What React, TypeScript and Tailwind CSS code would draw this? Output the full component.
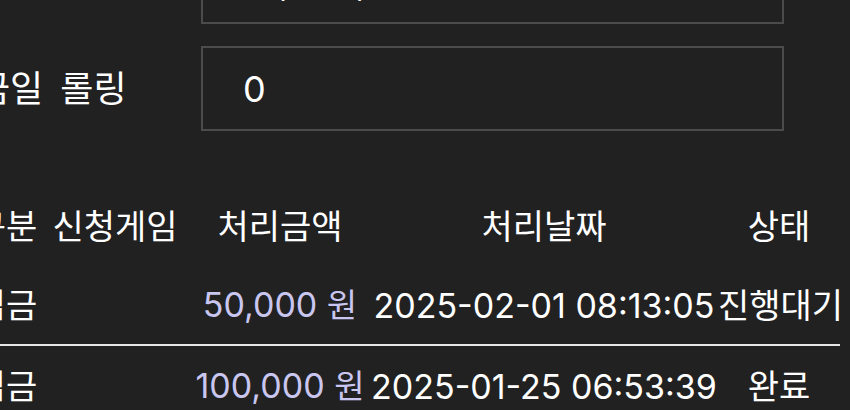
import React from 'react';

const rows = [
  { type: '입금', game: '', amount: '50,000', date: '2025-02-01 08:13:05', status: '진행대기' },
  { type: '입금', game: '', amount: '100,000', date: '2025-01-25 06:53:39', status: '완료' }
];

const cols = 'grid grid-cols-[68px_150px_180px_348px_122px]';

function FormRow({ label, value, className = '' }: { label: string; value: string; className?: string }) {
  return <div className={`flex items-center ${className}`}>
      <div className="w-[229px] pl-[5px] text-[36px] whitespace-nowrap [word-spacing:7px]">{label}</div>
      <div className="w-[583px] h-[85px] border-2 border-[#4b4b4b] pl-[40px] flex items-center text-[36px]">
        {value}
      </div>
    </div>;
}

export default function App() {
  return <div className="w-[850px] h-[410px] overflow-hidden bg-[#212121] text-white font-['Inter','Noto_Sans_CJK_KR',sans-serif]">
      <div className="mt-[-61px] ml-[-28px] w-[868px]">
        <div>
          <FormRow label="" value="10,000,000" />
          <FormRow label="금일 롤링" value="0" className="mt-[22px]" />
        </div>

        <div className="mt-[55px]">
          <div className={`${cols} h-[80px] items-center text-center text-[34px]`}>
            <div>구분</div>
            <div>신청게임</div>
            <div>처리금액</div>
            <div>처리날짜</div>
            <div>상태</div>
          </div>
          {rows.map((row, i) => <div key={i} className={`${cols} h-[80px] items-center text-center text-[34px] ${i === 0 ? 'border-b-2 border-[#e6e6e6]' : ''}`}>
              <div>{row.type}</div>
              <div>{row.game}</div>
              <div className="text-[#c9c6f0] whitespace-nowrap">
                {row.amount} <span className="text-[33px]">원</span>
              </div>
              <div className="whitespace-nowrap">{row.date}</div>
              <div className="whitespace-nowrap">{row.status}</div>
            </div>)}
        </div>
      </div>
    </div>;
}
